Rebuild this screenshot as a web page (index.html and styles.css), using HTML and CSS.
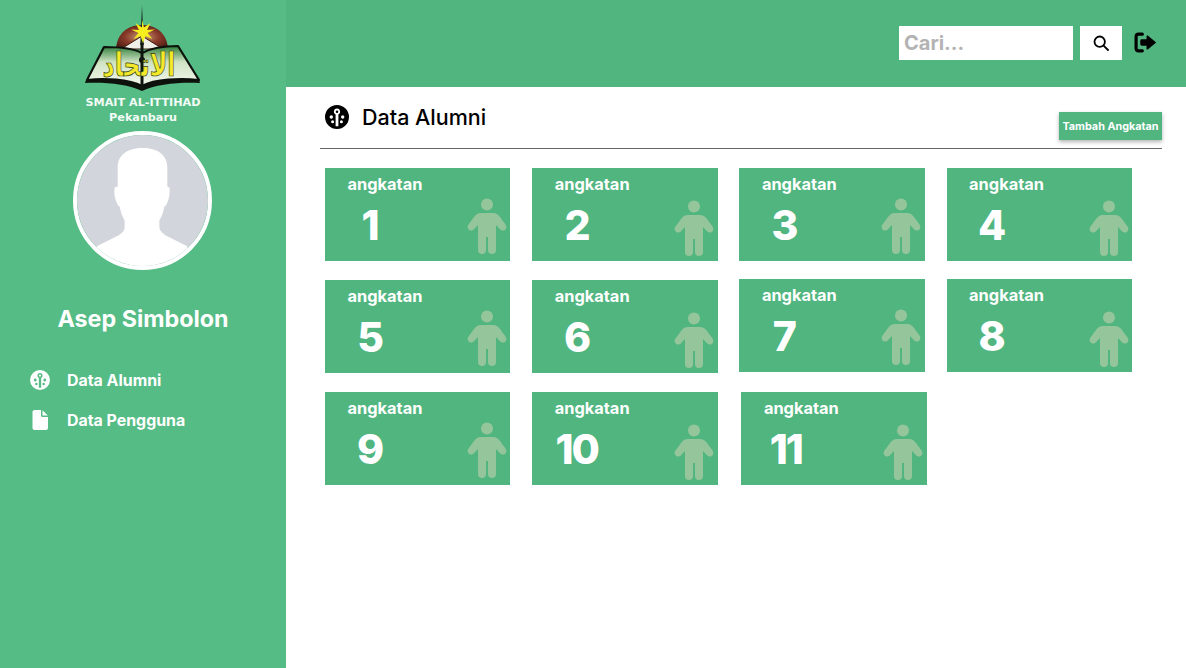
FILE: index.html
```html
<!DOCTYPE html>
<html lang="id">
<head>
<meta charset="utf-8">
<title>Data Alumni</title>
<link rel="stylesheet" href="styles.css">
</head>
<body>
<svg class="defs" width="0" height="0" aria-hidden="true">
  <symbol id="ic-alumni" viewBox="0 0 24 24">
    <path fill-rule="evenodd" d="M12 0a12 12 0 1 1 0 24a12 12 0 0 1 0-24zM12 3.600a3.100 3.100 0 0 0-1.400 5.900v11.700a9.300 9.300 0 0 0 2.800 0V9.500a3.100 3.100 0 0 0-1.400-5.900zM12 5.400a1.300 1.300 0 1 1 0 2.600a1.300 1.300 0 0 1 0-2.600zM6.300 10.300a1.700 1.700 0 1 0 0 3.400a1.700 1.700 0 0 0 0-3.400zM17.700 10.300a1.700 1.700 0 1 0 0 3.400a1.700 1.700 0 0 0 0-3.400zM7.600 15.200a1.500 1.500 0 1 0 0 3a1.500 1.500 0 0 0 0-3zM16.400 15.200a1.500 1.500 0 1 0 0 3a1.500 1.500 0 0 0 0-3z"/>
  </symbol>
  <symbol id="ic-person" viewBox="0 0 40 56">
    <circle cx="20" cy="6.500" r="6"/>
    <path d="M14 15h12c3 0 5 1.500 7 4l5.500 7.500c1.500 2 1 4.500-.7 5.500s-3.800.5-5-1L29 27v25a4 4 0 0 1-8 0V39h-2v13a4 4 0 0 1-8 0V27l-3.800 4c-1.200 1.500-3.300 2-5 1s-2.200-3.500-.7-5.500L7 19c2-2.500 4-4 7-4z"/>
  </symbol>
</svg>

<div class="app">
  <aside class="sidebar">
    <div class="logo-wrap">
      <svg class="logo" viewBox="0 0 116 92" role="img" aria-label="Logo">
        <defs>
          <radialGradient id="dome" cx="50%" cy="50%" r="60%">
            <stop offset="0" stop-color="#c9a27c"/>
            <stop offset="0.55" stop-color="#8a3a2a"/>
            <stop offset="1" stop-color="#4d1d14"/>
          </radialGradient>
          <linearGradient id="page" x1="0" y1="0" x2="0" y2="1">
            <stop offset="0" stop-color="#2e7d3a"/>
            <stop offset="0.4" stop-color="#cfe3c2"/>
            <stop offset="1" stop-color="#f4f8ee"/>
          </linearGradient>
        </defs>
        <path d="M31 46C32 30 43 22 57 22s25 8 26 24z" fill="url(#dome)"/>
        <path d="M36 46L57 33L78 46z" fill="#f0f0e8" stroke="#3a1a10" stroke-width="1"/>
        <path d="M57 2l1.800 40h-3.600z" fill="#1a2a20"/>
        <path d="M57 17l2 7.500 6.500-4.500-3.500 7 8-.5-7.500 3.500 5 6-7-3-2.500 7-2.500-7-7 3 5-6-7.500-3.500 8 .5-3.500-7 6.500 4.500z" fill="#f7ee1e"/>
        <path d="M19 44c14 0 29 1 38 6c9-5 22-7 36-7l21 34c-19-2-44-1-57 6c-13-7-38-8-55-6z" fill="url(#page)" stroke="#0d120c" stroke-width="2.200" stroke-linejoin="round"/>
        <path d="M1 77c20-2 44 0 56 6c12-6 37-8 57-6l1 3c-20-1-44 1-58 8c-14-7-37-9-57-8z" fill="#0d120c"/>
        <path d="M57 40v46" stroke="#10160f" stroke-width="3"/>
        <circle cx="57" cy="57" r="3" fill="#10160f"/>
        <text class="logo-text" transform="translate(54 73) scale(.88 1.200)" text-anchor="middle" direction="rtl">الاتحاد</text>
      </svg>
    </div>
    <p class="school">SMAIT AL-ITTIHAD<br>Pekanbaru</p>
    <div class="avatar">
      <svg viewBox="0 0 132 132" aria-hidden="true">
        <rect width="132" height="132" fill="#d3d5dc"/>
        <path d="M41 32c0-12 10-19 25-19s25 7 25 19v20l2 1c1 4 0 11-2 15-1 3-2 4-3 4-1 6-3 11-5 14v6c0 4 2 6 6 9l22 11V132H20v-20l22-11c5-3 6-5 6-9v-6c-2-3-4-8-5-14-1 0-2-1-3-4-2-4-3-11-2-15l3-1z" fill="#fff"/>
      </svg>
    </div>
    <h2 class="user-name">Asep Simbolon</h2>
    <nav class="side-nav">
      <a class="nav-item" href="#"><svg class="nav-icon"><use href="#ic-alumni"/></svg><span>Data Alumni</span></a>
      <a class="nav-item" href="#">
        <svg class="nav-icon" viewBox="0 0 20 20" aria-hidden="true"><path d="M4.500 0H11v5.500c0 .8.700 1.500 1.500 1.500H18v11c0 1.100-.900 2-2 2H4.500c-1.100 0-2-.900-2-2V2c0-1.100.900-2 2-2zM12.500 0.300L17.800 5.500H12.500z"/></svg>
        <span>Data Pengguna</span>
      </a>
    </nav>
  </aside>

  <div class="main">
    <header class="topbar">
      <div class="search-input">Cari...</div>
      <button class="search-btn" aria-label="Cari">
        <svg viewBox="0 0 16 16" width="16" height="16" fill="none" stroke="#000" stroke-width="1.800" stroke-linecap="round"><circle cx="6.700" cy="6.700" r="5.200"/><path d="M10.600 10.600L15 15"/></svg>
      </button>
      <svg class="logout" viewBox="0 0 22 20" aria-label="Keluar" role="img">
        <path d="M8 2H4.500C2.900 2 2 3 2 4.500v11C2 17 2.900 18 4.500 18H8" fill="none" stroke="#000" stroke-width="3" stroke-linecap="round"/>
        <path d="M13.200 3.400L21.200 10l-8 6.600c-.6.400-1.200 0-1.200-.7V13H7.500C6.700 13 6 12.400 6 11.500v-3C6 7.600 6.700 7 7.500 7H12V4.100c0-.7.600-1.100 1.200-.7z" fill="#000"/>
      </svg>
    </header>

    <main class="content">
      <div class="page-head">
        <h1 class="page-title"><svg class="title-icon"><use href="#ic-alumni"/></svg>Data Alumni</h1>
        <button class="add-btn">Tambah Angkatan</button>
      </div>
      <section class="grid">
        <a class="card"><span class="card-label">angkatan</span><span class="card-num">1</span><svg class="card-person"><use href="#ic-person"/></svg></a>
        <a class="card card-low"><span class="card-label">angkatan</span><span class="card-num">2</span><svg class="card-person"><use href="#ic-person"/></svg></a>
        <a class="card"><span class="card-label">angkatan</span><span class="card-num">3</span><svg class="card-person"><use href="#ic-person"/></svg></a>
        <a class="card card-low"><span class="card-label">angkatan</span><span class="card-num">4</span><svg class="card-person"><use href="#ic-person"/></svg></a>
        <a class="card"><span class="card-label">angkatan</span><span class="card-num">5</span><svg class="card-person"><use href="#ic-person"/></svg></a>
        <a class="card card-low"><span class="card-label">angkatan</span><span class="card-num">6</span><svg class="card-person"><use href="#ic-person"/></svg></a>
        <a class="card card-up"><span class="card-label">angkatan</span><span class="card-num">7</span><svg class="card-person"><use href="#ic-person"/></svg></a>
        <a class="card card-up card-low"><span class="card-label">angkatan</span><span class="card-num">8</span><svg class="card-person"><use href="#ic-person"/></svg></a>
        <a class="card"><span class="card-label">angkatan</span><span class="card-num">9</span><svg class="card-person"><use href="#ic-person"/></svg></a>
        <a class="card card-low"><span class="card-label">angkatan</span><span class="card-num">10</span><svg class="card-person"><use href="#ic-person"/></svg></a>
        <a class="card card-shift card-low"><span class="card-label">angkatan</span><span class="card-num">11</span><svg class="card-person"><use href="#ic-person"/></svg></a>
      </section>
    </main>
  </div>
</div>
</body>
</html>
```
FILE: styles.css
```css
* { box-sizing: border-box; }
html, body { margin: 0; height: 100%; }
body { font-family: "Inter", "Liberation Sans", sans-serif; background: #fff; overflow: hidden; }
.defs { position: absolute; }

.app { display: flex; width: 1186px; height: 668px; }

.sidebar { width: 286px; flex: none; background: #55bc85; display: flex; flex-direction: column; align-items: center; color: #fff; }
.logo-wrap { height: 95px; padding-top: 3px; }
.logo { display: block; width: 116px; height: 92px; }
.logo-text { font-family: "DejaVu Sans", sans-serif; font-weight: 700; font-size: 27px; fill: #f3e92a; stroke: #2c3a10; stroke-width: .6px; }
.school { margin: 0; font-family: "DejaVu Sans", sans-serif; font-weight: 700; font-size: 11.200px; line-height: 15px; text-align: center; color: #f2fbf5; height: 37px; }
.avatar { width: 139px; height: 139px; border-radius: 50%; border: 4px solid #fff; overflow: hidden; flex: none; margin: -1px 1px 0 0; }
.avatar svg { display: block; width: 100%; height: 100%; }
.user-name { margin: 34px 0 0; font-size: 23.300px; line-height: 29px; font-weight: 700; }
.side-nav { align-self: stretch; margin-top: 35px; padding-left: 30px; display: flex; flex-direction: column; gap: 16px; }
.nav-item { display: flex; align-items: center; gap: 17px; height: 24px; color: #fff; text-decoration: none; font-size: 15.900px; font-weight: 700; }
.nav-icon { width: 20px; height: 20px; fill: #fff; flex: none; }

.main { flex: 1; display: flex; flex-direction: column; min-width: 0; }
.topbar { height: 87px; flex: none; background: #50b57f; display: flex; align-items: center; padding: 0 28px 2px 613px; }
.search-input { width: 174px; height: 34px; background: #fff; color: #b3b3b3; font-weight: 700; font-size: 20px; line-height: 34px; padding-left: 5px; }
.search-btn { width: 42px; height: 34px; margin-left: 7px; padding: 0; border: 0; background: #fff; display: flex; align-items: center; justify-content: center; }
.logout { width: 23px; height: 21px; margin-left: 12px; }

.content { padding: 0 24px 0 34px; }
.page-head { height: 62px; margin-bottom: 19px; border-bottom: 1px solid #666; display: flex; align-items: flex-start; justify-content: space-between; }
.page-title { margin: 18px 0 0 5px; display: flex; align-items: center; gap: 13px; font-size: 21.500px; line-height: 24px; font-weight: 500; color: #000; }
.title-icon { width: 24px; height: 24px; fill: #000; flex: none; }
.add-btn { width: 103px; height: 28px; margin-top: 25px; padding: 0; border: 0; background: #50b57f; color: #fff; font: 700 10.800px "Inter", sans-serif; box-shadow: 0 2px 4px rgba(0,0,0,.3); }

.grid { display: grid; grid-template-columns: repeat(4, 185.400px); column-gap: 21.800px; row-gap: 19px; margin-left: 5px; }
.card { position: relative; display: block; height: 93px; background: #50b57f; color: #fff; }
.card-up { margin-top: -1px; margin-bottom: 1px; }
.card-shift { margin-left: 2px; margin-right: -2px; }
.card-label { position: absolute; left: 22.500px; top: 6px; font-size: 16.400px; line-height: 20px; font-weight: 700; }
.card-num { position: absolute; left: 0; width: 89px; text-align: center; top: 34px; font-size: 41px; line-height: 46px; font-weight: 800; letter-spacing: -2px; }
.card-person { position: absolute; left: 142px; top: 30px; width: 40px; height: 56px; fill: #95c69b; }
.card-low .card-person { top: 32px; }
```
